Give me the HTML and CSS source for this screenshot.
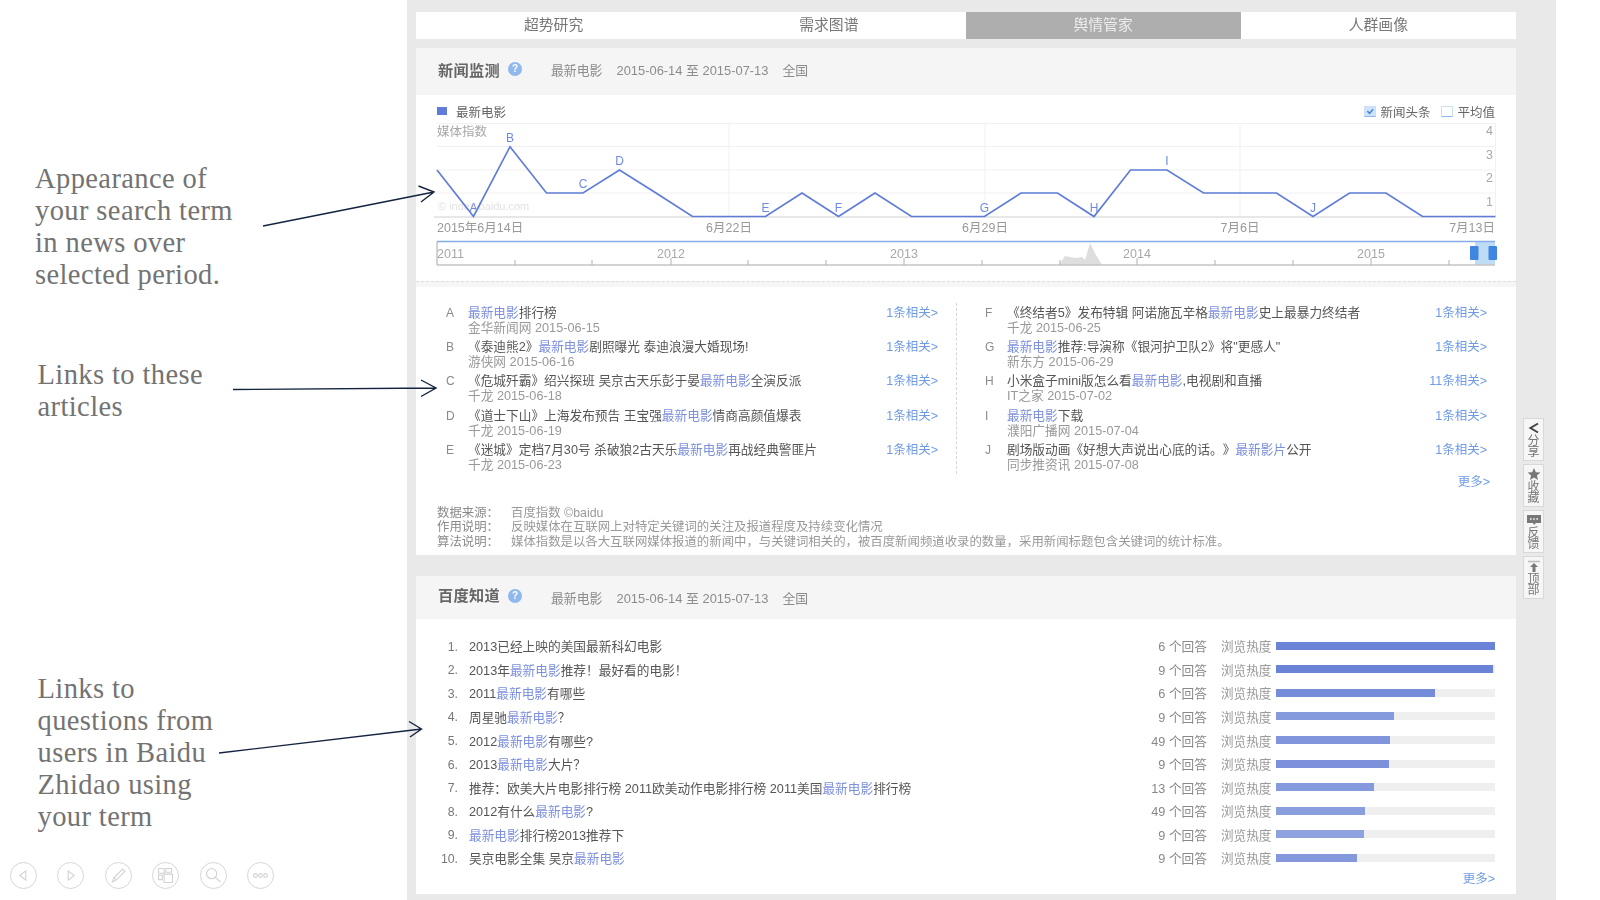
FILE: index.html
```html
<!DOCTYPE html>
<html lang="zh">
<head>
<meta charset="utf-8">
<title>百度指数</title>
<link rel="stylesheet" href="styles.css">
</head>
<body>
<div class="slide">
  <aside class="notes">
    <p class="note note-a">Appearance of<br>your search term<br>in news over<br>selected period.</p>
    <p class="note note-b">Links to these<br>articles</p>
    <p class="note note-c">Links to<br>questions from<br>users in Baidu<br>Zhidao using<br>your term</p>
    <div class="tools">
      <span class="tool"><svg viewBox="0 0 27 27"><path d="M16 8.5 9.5 13.5 16 18.5Z"/></svg></span>
      <span class="tool"><svg viewBox="0 0 27 27"><path d="M11 8.5 17.5 13.5 11 18.5Z"/></svg></span>
      <span class="tool"><svg viewBox="0 0 27 27"><path d="M7 20.5 8.5 16 18 6.5 20.5 9 11 18.5Z M9 16 11 18"/></svg></span>
      <span class="tool"><svg viewBox="0 0 27 27"><path d="M6 6h6v5H6Z M14 6h6v4H14Z M6 13h4v5H6Z M12 12h9v9H12Z"/></svg></span>
      <span class="tool"><svg viewBox="0 0 27 27"><circle cx="11.5" cy="11.5" r="5.5"/><path d="M15.5 15.5 21 20.5"/></svg></span>
      <span class="tool"><svg viewBox="0 0 27 27"><circle cx="8" cy="13.5" r="2"/><circle cx="13.5" cy="13.5" r="2"/><circle cx="19" cy="13.5" r="2"/></svg></span>
    </div>
  </aside>

  <main class="panel">
    <nav class="tabs">
      <a class="tab">超势研究</a>
      <a class="tab">需求图谱</a>
      <a class="tab tab-on">舆情管家</a>
      <a class="tab">人群画像</a>
    </nav>

    <section class="card card-news">
      <header class="card-head head-news">
        <h2 class="card-title">新闻监测</h2>
        <span class="help">?</span>
        <span class="card-sub">最新电影</span>
        <span class="card-sub">2015-06-14 至 2015-07-13</span>
        <span class="card-sub">全国</span>
      </header>
      <div class="legend">
        <span class="legend-dot"></span>
        <span class="legend-name">最新电影</span>
        <span class="check check-on"><svg viewBox="0 0 12 12"><path d="M2.5 5.5 5.5 8.5 10 3"/></svg></span>
        <span class="check-label">新闻头条</span>
        <span class="check"></span>
        <span class="check-label">平均值</span>
      </div>
      <svg class="chart" viewBox="416 123 1100 158" width="1100" height="158">
        <g class="grid">
          <path d="M437 123.5H1495.5M437 146.5H1495.5M437 170H1495.5M437 193H1495.5"/>
          <path d="M729 123V216M985 123V216M1240 123V216M1495.5 123V216"/>
        </g>
        <path class="axis" d="M434 217H1495.5"/>
        <text class="t-axis" x="437" y="136">媒体指数</text>
        <text class="t-mark" x="438" y="210">© index.baidu.com</text>
        <g class="t-axis t-end">
          <text x="1493" y="135">4</text><text x="1493" y="159">3</text><text x="1493" y="182">2</text><text x="1493" y="206">1</text>
        </g>
        <polyline class="line" points="437,170 473.5,216.5 510,146.7 546.5,193 583,193 619.5,170 656,193 692.5,216.5 729,216.5 765.5,216.5 802,193 838.5,216.5 875,193 911.5,216.5 948,216.5 984.5,216.5 1021,193 1057.5,193 1094,216.5 1130.5,170 1167,170 1203.5,193 1240,193 1276.5,193 1313,216.5 1349.5,193 1386,193 1422.5,216.5 1459,216.5 1495.5,216.5"/>
        <g class="pts">
          <text x="473.5" y="212">A</text><text x="510" y="142">B</text><text x="583" y="188">C</text><text x="619.5" y="165">D</text><text x="765.5" y="212">E</text><text x="838.5" y="212">F</text><text x="984.5" y="212">G</text><text x="1094" y="212">H</text><text x="1167" y="165">I</text><text x="1313" y="212">J</text>
        </g>
        <g class="t-date">
          <text x="437" y="232">2015年6月14日</text>
          <text class="t-mid" x="729" y="232">6月22日</text>
          <text class="t-mid" x="985" y="232">6月29日</text>
          <text class="t-mid" x="1240" y="232">7月6日</text>
          <text class="t-end" x="1495" y="232">7月13日</text>
        </g>
        <path class="area" d="M1059 265 1065 256 1070 257 1076 258 1082 257 1085 260 1090 243 1096 255 1102 265Z"/>
        <rect class="sel" x="1475" y="241" width="20" height="24"/>
        <path class="frame" d="M437 265V241.5"/>
        <path class="frame" d="M437 265H1495"/>
        <path class="frame-top" d="M437 241.5H1495"/>
        <path class="ticks" d="M515 265v-5M592 265v-5M671 265v-7M748 265v-5M826 265v-5M904 265v-7M982 265v-5M1060 265v-5M1137 265v-7M1215 265v-5M1293 265v-5M1371 265v-7M1449 265v-5"/>
        <g class="t-axis t-mid">
          <text class="t-start" x="437" y="258">2011</text>
          <text x="671" y="258">2012</text><text x="904" y="258">2013</text><text x="1137" y="258">2014</text><text x="1371" y="258">2015</text>
        </g>
        <rect class="handle" x="1470" y="246" width="8.5" height="14" rx="1"/>
        <rect class="handle" x="1488.500" y="246" width="8.5" height="14" rx="1"/>
      </svg>
      <div class="divider"></div>
      <div class="news">
        <ul class="news-col news-left">
          <li class="item"><b class="mark">A</b><div class="item-body"><a class="item-title"><em>最新电影</em>排行榜</a><span class="item-src">金华新闻网 2015-06-15</span></div><a class="rel">1条相关&gt;</a></li>
          <li class="item"><b class="mark">B</b><div class="item-body"><a class="item-title">《泰迪熊2》<em>最新电影</em>剧照曝光 泰迪浪漫大婚现场!</a><span class="item-src">游侠网 2015-06-16</span></div><a class="rel">1条相关&gt;</a></li>
          <li class="item"><b class="mark">C</b><div class="item-body"><a class="item-title">《危城歼霸》绍兴探班 吴京古天乐彭于晏<em>最新电影</em>全演反派</a><span class="item-src">千龙 2015-06-18</span></div><a class="rel">1条相关&gt;</a></li>
          <li class="item"><b class="mark">D</b><div class="item-body"><a class="item-title">《道士下山》上海发布预告 王宝强<em>最新电影</em>情商高颜值爆表</a><span class="item-src">千龙 2015-06-19</span></div><a class="rel">1条相关&gt;</a></li>
          <li class="item"><b class="mark">E</b><div class="item-body"><a class="item-title">《迷城》定档7月30号 杀破狼2古天乐<em>最新电影</em>再战经典警匪片</a><span class="item-src">千龙 2015-06-23</span></div><a class="rel">1条相关&gt;</a></li>
        </ul>
        <div class="news-right">
          <ul class="news-col">
            <li class="item"><b class="mark">F</b><div class="item-body"><a class="item-title">《终结者5》发布特辑 阿诺施瓦辛格<em>最新电影</em>史上最暴力终结者</a><span class="item-src">千龙 2015-06-25</span></div><a class="rel">1条相关&gt;</a></li>
            <li class="item"><b class="mark">G</b><div class="item-body"><a class="item-title"><em>最新电影</em>推荐:导演称《银河护卫队2》将"更感人"</a><span class="item-src">新东方 2015-06-29</span></div><a class="rel">1条相关&gt;</a></li>
            <li class="item"><b class="mark">H</b><div class="item-body"><a class="item-title">小米盒子mini版怎么看<em>最新电影</em>,电视剧和直播</a><span class="item-src">IT之家 2015-07-02</span></div><a class="rel">11条相关&gt;</a></li>
            <li class="item"><b class="mark">I</b><div class="item-body"><a class="item-title"><em>最新电影</em>下载</a><span class="item-src">濮阳广播网 2015-07-04</span></div><a class="rel">1条相关&gt;</a></li>
            <li class="item"><b class="mark">J</b><div class="item-body"><a class="item-title">剧场版动画《好想大声说出心底的话。》<em>最新影片</em>公开</a><span class="item-src">同步推资讯 2015-07-08</span></div><a class="rel">1条相关&gt;</a></li>
          </ul>
          <a class="more more-news">更多&gt;</a>
        </div>
      </div>
      <dl class="about">
        <div class="about-row"><dt>数据来源：</dt><dd>百度指数 ©baidu</dd></div>
        <div class="about-row"><dt>作用说明：</dt><dd>反映媒体在互联网上对特定关键词的关注及报道程度及持续变化情况</dd></div>
        <div class="about-row"><dt>算法说明：</dt><dd>媒体指数是以各大互联网媒体报道的新闻中，与关键词相关的，被百度新闻频道收录的数量，采用新闻标题包含关键词的统计标准。</dd></div>
      </dl>
    </section>

    <section class="card card-ask">
      <header class="card-head head-ask">
        <h2 class="card-title">百度知道</h2>
        <span class="help">?</span>
        <span class="card-sub">最新电影</span>
        <span class="card-sub">2015-06-14 至 2015-07-13</span>
        <span class="card-sub">全国</span>
      </header>
      <ol class="asks">
        <li class="ask"><span class="ask-n">1.</span><a class="ask-q">2013已经上映的美国最新科幻电影</a><span class="ask-c">6 个回答</span><span class="ask-l">浏览热度</span><span class="bar"><i class="fill" style="width:100%;background:#6a83d6"></i></span></li>
        <li class="ask"><span class="ask-n">2.</span><a class="ask-q">2013年<em>最新电影</em>推荐！最好看的电影！</a><span class="ask-c">9 个回答</span><span class="ask-l">浏览热度</span><span class="bar"><i class="fill" style="width:98.9%;background:#6a83d6"></i></span></li>
        <li class="ask"><span class="ask-n">3.</span><a class="ask-q">2011<em>最新电影</em>有哪些</a><span class="ask-c">6 个回答</span><span class="ask-l">浏览热度</span><span class="bar"><i class="fill" style="width:72.6%;background:#758cd9"></i></span></li>
        <li class="ask"><span class="ask-n">4.</span><a class="ask-q">周星驰<em>最新电影</em>？</a><span class="ask-c">9 个回答</span><span class="ask-l">浏览热度</span><span class="bar"><i class="fill" style="width:53.7%;background:#8599dd"></i></span></li>
        <li class="ask"><span class="ask-n">5.</span><a class="ask-q">2012<em>最新电影</em>有哪些?</a><span class="ask-c">49 个回答</span><span class="ask-l">浏览热度</span><span class="bar"><i class="fill" style="width:52%;background:#8095db"></i></span></li>
        <li class="ask"><span class="ask-n">6.</span><a class="ask-q">2013<em>最新电影</em>大片？</a><span class="ask-c">9 个回答</span><span class="ask-l">浏览热度</span><span class="bar"><i class="fill" style="width:51.6%;background:#7c91da"></i></span></li>
        <li class="ask"><span class="ask-n">7.</span><a class="ask-q">推荐：欧美大片电影排行榜 2011欧美动作电影排行榜 2011美国<em>最新电影</em>排行榜</a><span class="ask-c">13 个回答</span><span class="ask-l">浏览热度</span><span class="bar"><i class="fill" style="width:44.6%;background:#8599dd"></i></span></li>
        <li class="ask"><span class="ask-n">8.</span><a class="ask-q">2012有什么<em>最新电影</em>?</a><span class="ask-c">49 个回答</span><span class="ask-l">浏览热度</span><span class="bar"><i class="fill" style="width:40.8%;background:#8a9ede"></i></span></li>
        <li class="ask"><span class="ask-n">9.</span><a class="ask-q"><em>最新电影</em>排行榜2013推荐下</a><span class="ask-c">9 个回答</span><span class="ask-l">浏览热度</span><span class="bar"><i class="fill" style="width:40.3%;background:#8fa2e0"></i></span></li>
        <li class="ask"><span class="ask-n">10.</span><a class="ask-q">吴京电影全集 吴京<em>最新电影</em></a><span class="ask-c">9 个回答</span><span class="ask-l">浏览热度</span><span class="bar"><i class="fill" style="width:37.1%;background:#8598dc"></i></span></li>
      </ol>
      <a class="more more-ask">更多&gt;</a>
    </section>

    <div class="side">
      <a class="side-btn"><svg viewBox="0 0 14 12"><path class="ic-line" d="M11 1.5 3.500 6 11 10.500"/></svg><span class="side-text">分<br>享</span></a>
      <a class="side-btn"><svg viewBox="0 0 14 12"><path class="ic-fill" d="M7 0 8.8 4.2 13.5 4.6 9.9 7.6 11 12 7 9.6 3 12 4.1 7.6 .5 4.6 5.2 4.2Z"/></svg><span class="side-text">收<br>藏</span></a>
      <a class="side-btn"><svg viewBox="0 0 14 12"><path class="ic-fill" d="M0 1h14v8H9L7 11 6 9H0Z"/><path class="ic-dots" d="M3 5h1.6M6.2 5h1.6M9.4 5h1.6"/></svg><span class="side-text">反<br>馈</span></a>
      <a class="side-btn"><svg viewBox="0 0 14 12"><path class="ic-soft" d="M1 1.5h12"/><path class="ic-fill" d="M7 3 11 7H8.5V12H5.500V7H3Z"/></svg><span class="side-text">顶<br>部</span></a>
    </div>
  </main>

  <svg class="arrows" viewBox="0 0 1600 900" width="1600" height="900">
    <path d="M263 226 434 192M418.500 186 434 192 421 202"/>
    <path d="M233 389.500 436 388M421 380 436 388 421 396.500"/>
    <path d="M219 753 421.500 729M409 721.500 421.500 729 410 737"/>
  </svg>
</div>
</body>
</html>
```
FILE: styles.css
```css
* { box-sizing: border-box; }
html, body { margin: 0; padding: 0; background: #fff; }
body { width: 1600px; height: 900px; overflow: hidden; font-family: "Liberation Sans", "Noto Sans CJK SC", sans-serif; font-size: 12.7px; color: #666; text-spacing-trim: space-all; }
ul, ol, dl, dd, p, h2 { margin: 0; padding: 0; list-style: none; }
em { font-style: normal; color: #7b8fdd; }
a { color: inherit; text-decoration: none; }

.slide { position: relative; display: flex; width: 1600px; height: 900px; }

/* left annotations */
.notes { flex: 0 0 407px; display: flex; flex-direction: column; padding-top: 163px; }
.note { font-family: "Liberation Serif", serif; font-size: 28.500px; letter-spacing: .4px; line-height: 32px; color: #737373; padding-left: 37.500px; }
.note-a { padding-left: 35px; }
.note-b { margin-top: 68px; }
.note-c { margin-top: 250px; }
.tools { display: flex; gap: 20.500px; margin-top: 29px; padding-left: 9.500px; }
.tool { width: 27px; height: 27px; border: 1px solid #d6d6d6; border-radius: 50%; display: block; }
.tool svg { display: block; width: 25px; height: 25px; fill: none; stroke: #d2d2d2; stroke-width: 1.200; }

/* screenshot panel */
.panel { position: relative; flex: 0 0 1149px; height: 900px; background: #e9e9e9; padding: 12px 40px 0 9px; filter: blur(.35px); }

.tabs { display: flex; height: 27px; background: #fff; }
.tab { flex: 1 1 0; text-align: center; line-height: 27px; font-size: 14.800px; color: #777; }
.tab-on { background: #aeaeae; color: #eee; margin-left: -1px; }

.card { background: #fff; }
.card-news { margin-top: 9px; }
.card-ask { margin-top: 21px; padding-bottom: 8px; }
.card-head { display: flex; align-items: center; background: #f5f5f5; padding-left: 22px; }
.head-news { height: 47px; padding-bottom: 5px; }
.head-ask { height: 43px; }
.card-title { font-size: 15.200px; font-weight: bold; color: #666; letter-spacing: .3px; }
.head-ask .card-title { margin-top: -6px; }
.head-ask .help { margin-top: -3px; }
.help { width: 14px; height: 14px; margin-left: 8px; margin-right: 29px; border-radius: 50%; background: #8fb8ec; color: #fff; font-size: 10px; font-weight: bold; line-height: 14px; text-align: center; }
.card-sub { color: #8c8c8c; margin-right: 14px; font-size: 12.900px; }

.legend { display: flex; align-items: center; height: 28px; padding: 4px 21px 0; font-size: 12.500px; color: #666; }
.legend-dot { width: 10px; height: 8px; background: #5f7cd8; margin-right: 9px; }
.legend-name { margin-right: auto; }
.check { width: 12px; height: 11px; border: 1px solid #cfdff2; border-bottom-color: #8bb7ee; margin-right: 4px; margin-left: 11px; display: block; }
.check svg { display: block; width: 10px; height: 9px; fill: none; stroke: #3f86e0; stroke-width: 2; }
.check-on { background: #cfe3fa; }
.check-label { color: #666; }

/* chart */
.chart { display: block; font-family: "Liberation Sans", "Noto Sans CJK SC", sans-serif; font-size: 12.500px; }
.grid path { fill: none; stroke: #f1f1f1; stroke-width: 1; }
.axis { fill: none; stroke: #dfdfdf; stroke-width: 1.500; }
.line { fill: none; stroke: #5f7cd8; stroke-width: 1.700; stroke-linejoin: miter; }
.t-axis { fill: #a8a8a8; }
.t-mark { fill: #e2e2e2; font-size: 11px; }
.t-date { fill: #999; }
.t-end { text-anchor: end; }
.t-mid { text-anchor: middle; }
.t-mid .t-start { text-anchor: start; }
.pts text { fill: #6f8bdf; text-anchor: middle; font-size: 12px; }
.area { fill: #dedede; }
.sel { fill: #bfdcf7; }
.frame { fill: none; stroke: #c4c4c4; stroke-width: 1.500; }
.frame-top { fill: none; stroke: #86ade6; stroke-width: 1.500; }
.ticks { fill: none; stroke: #b0b0b0; stroke-width: 1; }
.handle { fill: #3f86e0; }

.divider { height: 6px; background: #f6f6f6; border-top: 1px dashed #dddddd; }

/* news list */
.news { display: grid; grid-template-columns: 541px 559px; padding-top: 16px; }
.news-left { align-self: start; border-right: 1px dashed #d4d4d4; padding: 0 18px 0 29px; }
.news-right { display: flex; flex-direction: column; padding: 0 29px 0 27px; }
.item { display: flex; height: 34.200px; }
.mark { flex: 0 0 23px; font-weight: normal; color: #8a8a8a; line-height: 17px; font-size: 12px; padding: 2px 0 0 1px; }
.item-body { flex: 1 1 auto; display: flex; flex-direction: column; padding-top: 2px; }
.item-title { line-height: 16px; color: #555; font-size: 12.700px; white-space: nowrap; }
.item-src { line-height: 14px; color: #999; }
.rel { color: #6f9be6; line-height: 17px; padding-top: 2px; white-space: nowrap; font-size: 12.500px; }
.more { color: #6f9be6; font-size: 12.500px; line-height: 14px; display: block; text-align: right; }
.more-news { margin-right: -3px; padding-top: 1px; }
.more-ask { padding-right: 21px; margin-top: 2px; }

.about { margin-top: 16px; padding: 1px 21px 6px; }
.about-row { display: flex; line-height: 14.300px; height: 14.300px; color: #999; font-size: 12.400px; }
.about-row dt { flex: 0 0 74px; color: #8a8a8a; }

/* zhidao */
.asks { padding-top: 15px; }
.ask { display: flex; align-items: center; height: 23.600px; padding-right: 21px; }
.ask-n { flex: 0 0 42px; text-align: right; color: #777; font-size: 12.300px; padding-top: 2px; }
.ask-q { flex: 1 1 auto; margin-left: 11px; color: #555; white-space: nowrap; }
.ask-c { flex: 0 0 auto; color: #888; }
.ask-l { flex: 0 0 52px; margin-left: 14px; color: #999; white-space: nowrap; font-size: 12.600px; }
.bar { flex: 0 0 219px; height: 8px; margin-left: 3px; background: #efefef; display: block; }
.fill { display: block; height: 8px; }

/* floating side buttons */
.side { position: absolute; left: 1116px; top: 418px; display: flex; flex-direction: column; gap: 3px; }
.side-btn { width: 21px; height: 43px; background: #f6f6f6; border: 1px solid #d8d8d8; display: flex; flex-direction: column; align-items: center; padding-top: 3px; }
.side-btn svg { width: 14px; height: 12px; display: block; flex: none; }
.side-text { font-size: 12px; line-height: 11px; color: #777; text-align: center; margin-top: 2px; }
.ic-line { fill: none; stroke: #444; stroke-width: 2; }
.ic-fill { fill: #777; }
.ic-dots { fill: none; stroke: #f6f6f6; stroke-width: 1.500; }
.ic-soft { fill: none; stroke: #bbb; stroke-width: 1.500; }

.arrows { position: absolute; left: 0; top: 0; pointer-events: none; fill: none; stroke: #14233f; stroke-width: 1.400; }
```
